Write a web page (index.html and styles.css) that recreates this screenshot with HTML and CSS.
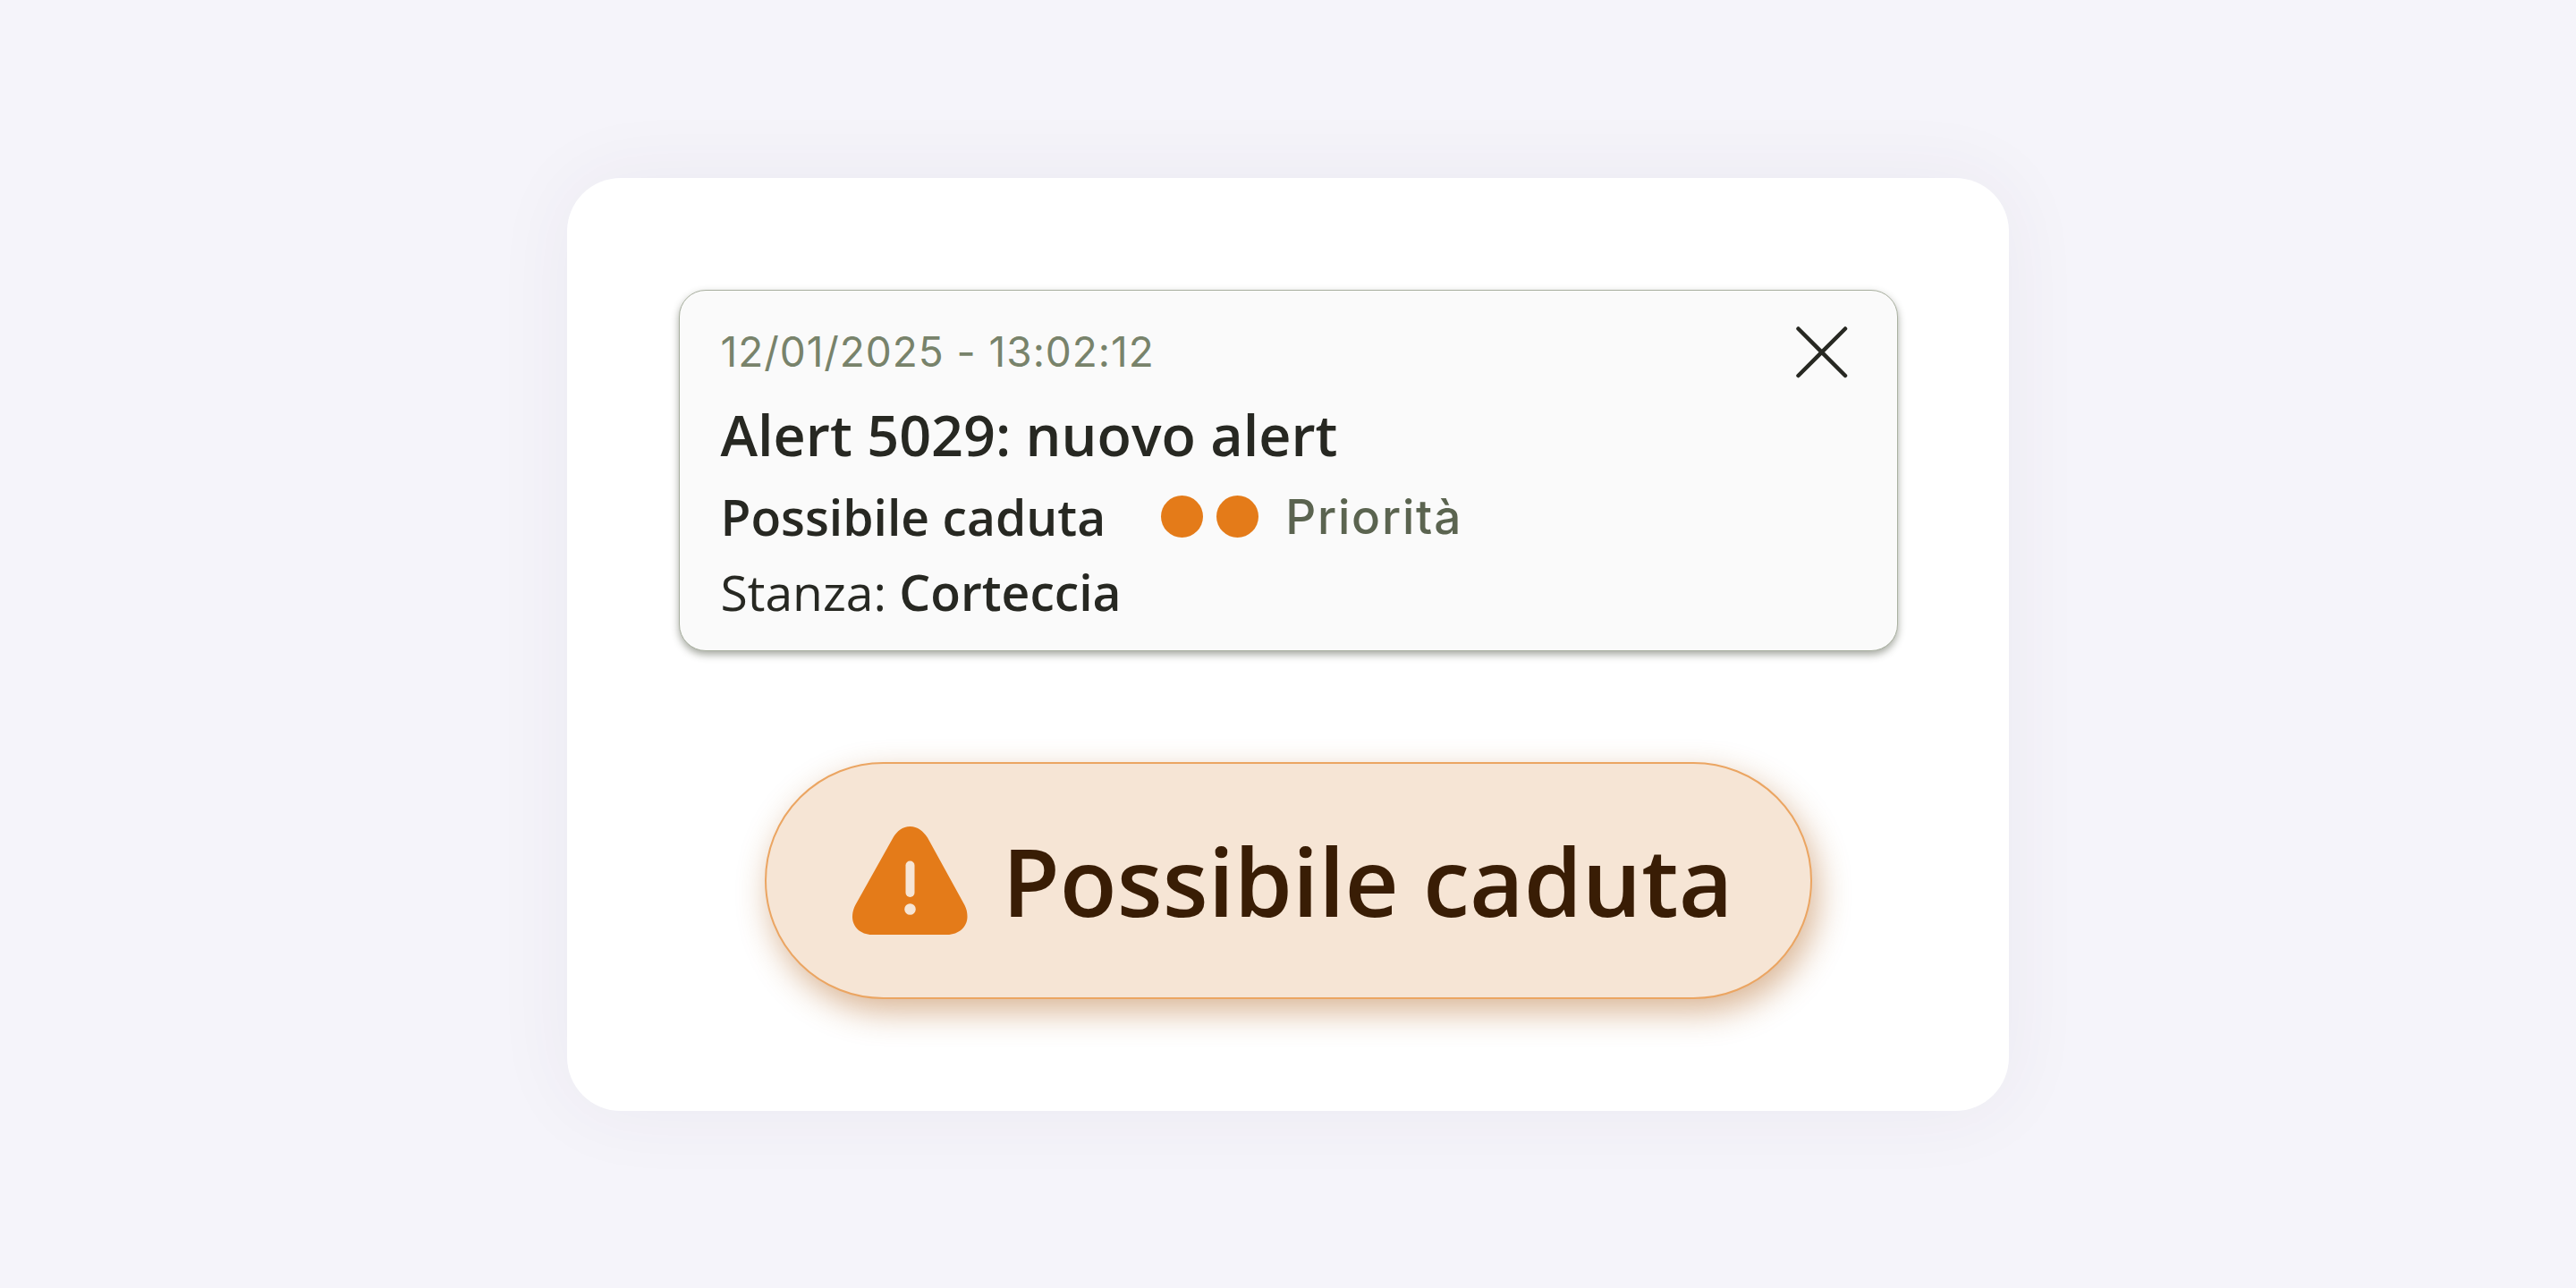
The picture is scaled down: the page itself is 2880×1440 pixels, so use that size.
FILE: index.html
```html
<!DOCTYPE html>
<html lang="it">
<head>
    <meta charset="UTF-8">
    <meta name="viewport" content="width=device-width, initial-scale=1.0">
    <title>Alert</title>
    <link rel="stylesheet" href="styles.css">
</head>
<body>
    <div class="panel">
        <div class="alert-card">
            <div class="alert-header">
                <span class="date">12/01/2025 - 13:02:12</span>
                <button class="close" aria-label="Chiudi">
                    <svg width="58" height="58" viewBox="0 0 58 58">
                        <path d="M2.5 2.5L55 55M55 2.5L2.5 55" />
                    </svg>
                </button>
            </div>
            <h2>Alert 5029: nuovo alert</h2>
            <div class="alert-type">
                <strong>Possibile caduta</strong>
                <span class="dots">
                    <span class="dot"></span>
                    <span class="dot"></span>
                </span>
                <span class="priority">Priorità</span>
            </div>
            <p class="room">Stanza: <strong>Corteccia</strong></p>
        </div>

        <div class="badge">
            <svg class="warning" width="129" height="121" viewBox="0 0 129 121">
                <path class="triangle" d="M45.5 12.5C50 5 56 0 64.5 0S79 5 84 12.5L125.5 88C127.5 92 128.5 96 128.5 101C128.5 112 119 121 106 121H22C9 121 0 112 0 101C0 96 1.5 91 3.5 87.5Z" />
                <rect x="59.5" y="38.5" width="10" height="40.5" rx="5" />
                <circle cx="64.5" cy="92.5" r="6.3" />
            </svg>
            <span>Possibile caduta</span>
        </div>
    </div>
</body>
</html>
```

FILE: styles.css
```css
* {
    box-sizing: border-box;
    margin: 0;
    padding: 0;
}

body {
    font-family: "Open Sans", sans-serif;
    background-color: #f5f4fa;
    color: #272822;
    min-height: 1440px;
    display: flex;
    align-items: center;
    justify-content: center;
}

.panel {
    width: 1612px;
    height: 1043px;
    padding: 125px 124.5px;
    background: white;
    border-radius: 60px;
    box-shadow: 0 0 90px rgba(60, 50, 90, 0.06);
    display: flex;
    flex-direction: column;
    align-items: center;
    justify-content: space-between;
}

.alert-card {
    width: 100%;
    height: 404px;
    padding: 40px 55px 0 46px;
    background: #fafafa;
    border: 1px solid #a9b0a0;
    border-radius: 30px;
    box-shadow: 0 4px 8px rgba(60, 66, 48, 0.45);
}

.alert-header {
    height: 58px;
    display: flex;
    align-items: center;
    justify-content: space-between;
}

.date {
    margin-bottom: 2px;
    font-family: Inter, sans-serif;
    font-size: 46px;
    font-weight: 400;
    line-height: 54px;
    letter-spacing: 0.95px;
    color: #78836b;
}

.close {
    width: 58px;
    height: 58px;
    background: none;
    border: none;
    cursor: pointer;
}

.close path {
    stroke: #272822;
    stroke-width: 4.5;
    stroke-linecap: round;
}

h2 {
    margin-top: 21px;
    font-size: 62.9px;
    line-height: 84px;
    font-weight: 600;
}

.alert-type {
    display: flex;
    align-items: center;
    height: 84px;
    margin-top: 8px;
    font-size: 55.2px;
}

strong {
    font-weight: 600;
}

.dots {
    display: flex;
    gap: 15px;
    margin: 0 30px 0 62px;
}

.dot {
    width: 47px;
    height: 47px;
    border-radius: 50%;
    background: #e47b19;
}

.priority {
    font-family: Inter, sans-serif;
    font-size: 53px;
    font-weight: 500;
    letter-spacing: 1.8px;
    color: #5b6450;
}

.room {
    font-size: 55.2px;
    line-height: 84px;
}

.badge {
    width: 1171px;
    height: 265px;
    padding-left: 96px;
    display: flex;
    align-items: center;
    gap: 39px;
    background: #f6e5d5;
    border: 2px solid #eba562;
    border-radius: 133px;
    box-shadow: 6px 14px 36px rgba(178, 102, 35, 0.48);
    color: #391d05;
    font-size: 104.7px;
    font-weight: 600;
    white-space: nowrap;
}

.warning {
    fill: #f6e5d5;
}

.triangle {
    fill: #e47b19;
}
```
